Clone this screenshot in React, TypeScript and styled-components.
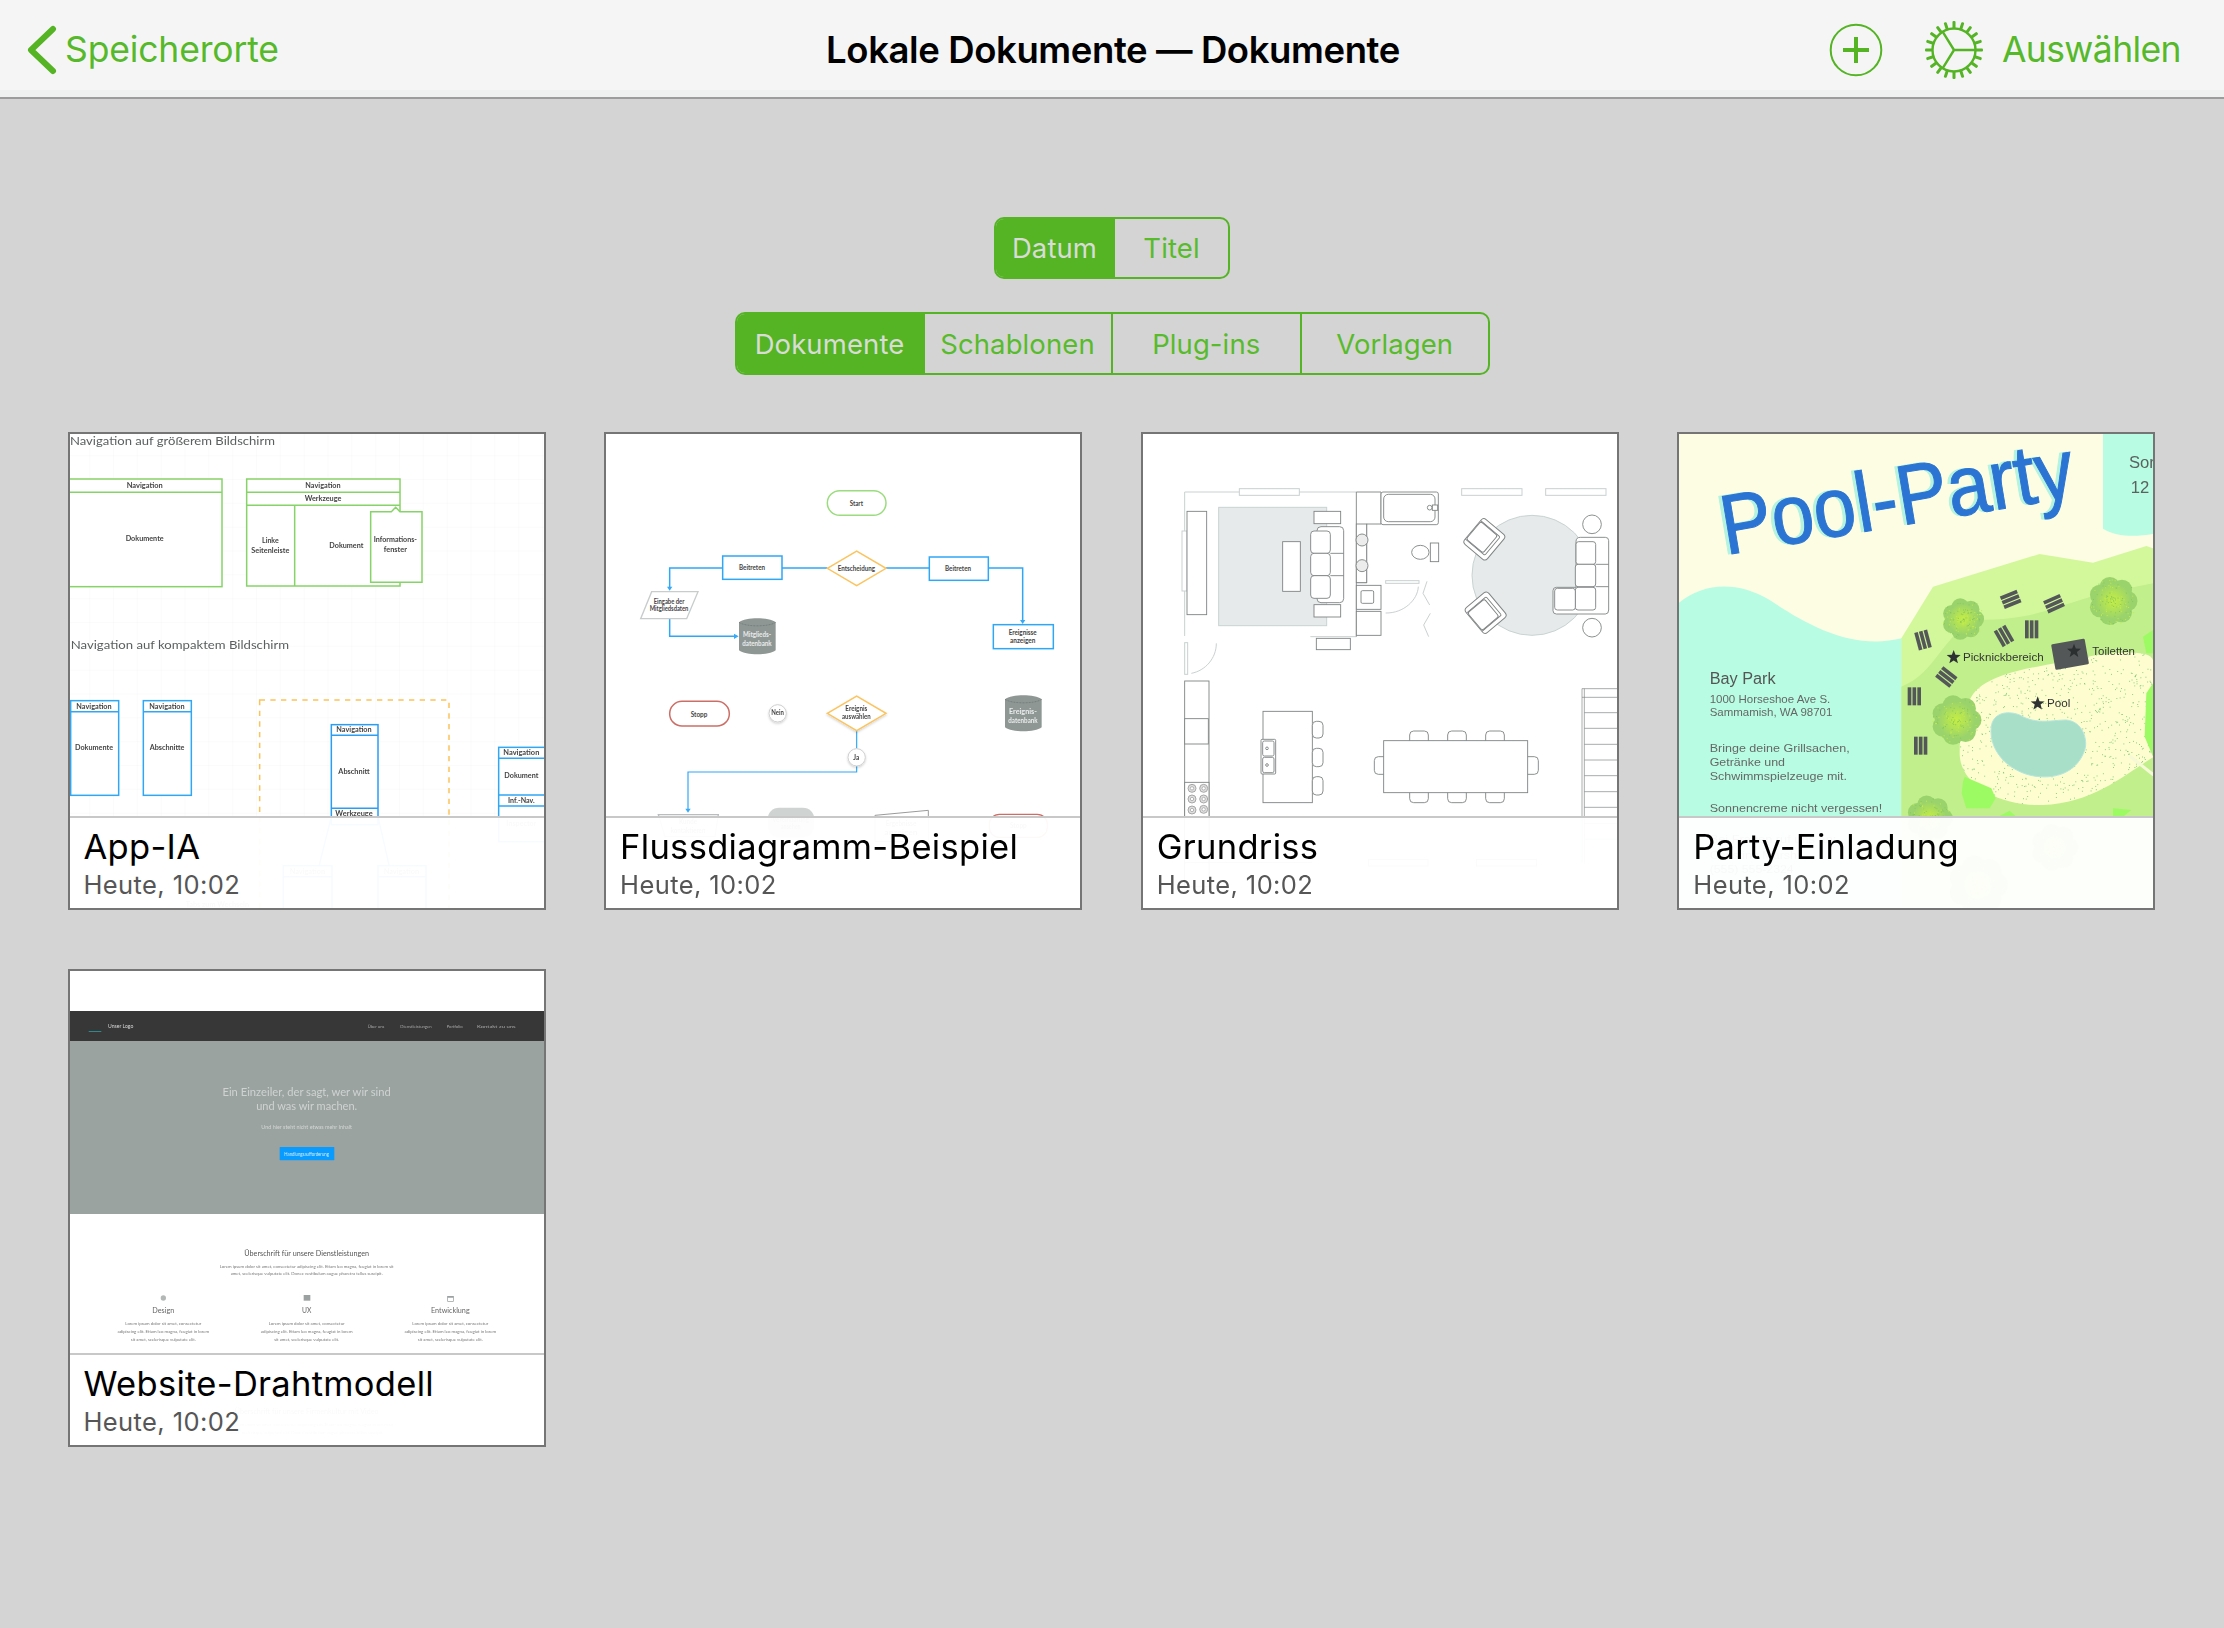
import React from "react";
import styled, { createGlobalStyle } from "styled-components";

const GREEN = "#54b424";
const GlobalStyle = createGlobalStyle`
  html, body { margin: 0; padding: 0; background: #d4d4d4; }
  body { font-family: Inter, "Noto Sans", sans-serif; }
`;

const Page = styled.div`
  width: 2224px;
  height: 1628px;
  overflow: hidden;
  background: #d4d4d4;
  display: flex;
  flex-direction: column;
`;
const NavBar = styled.header`
  box-sizing: border-box;
  height: 99px;
  flex: none;
  background: linear-gradient(#f5f5f5 90px, #eff1f1 90px);
  border-bottom: 2px solid #9c9c9c;
  display: grid;
  grid-template-columns: 1fr auto 1fr;
  align-items: center;
  padding: 2px 43px 0 27px;
`;
const BackLink = styled.div`
  display: flex;
  align-items: center;
  gap: 8px;
  color: ${GREEN};
`;
const NavLabel = styled.span`
  font-size: 35.5px;
  letter-spacing: -0.15px;
  color: #55b92a;
`;
const ActionLabel = styled(NavLabel)`
  letter-spacing: -0.6px;
`;
const NavTitle = styled.h1`
  margin: 0;
  padding-left: 18px;
  font-size: 36.5px;
  font-weight: 600;
  letter-spacing: -0.4px;
  color: #000;
  white-space: nowrap;
`;
const NavActions = styled.div`
  display: flex;
  align-items: center;
  justify-content: flex-end;
`;
const PlusIcon = styled.svg`
  width: 54px;
  height: 54px;
  margin-right: 40px;
`;
const GearIcon = styled.svg`
  width: 62px;
  height: 62px;
  margin-right: 17px;
`;
const Filters = styled.section`
  display: flex;
  flex-direction: column;
  align-items: center;
  gap: 33px;
  margin-top: 118px;
  flex: none;
`;
const Segmented = styled.div`
  display: flex;
  box-sizing: border-box;
  border: 2px solid ${GREEN};
  border-radius: 10px;
  overflow: hidden;
`;
const Segment = styled.div<{ $active?: boolean; $width: number; $height: number }>`
  box-sizing: border-box;
  width: ${(p) => p.$width}px;
  height: ${(p) => p.$height}px;
  display: flex;
  align-items: center;
  justify-content: center;
  font-size: 27.5px;
  letter-spacing: 0.1px;
  background: ${(p) => (p.$active ? GREEN : "transparent")};
  color: ${(p) => (p.$active ? "#d8dcd4" : "#58bb2c")};
  & + & { border-left: 2px solid ${GREEN}; }
`;
const Grid = styled.main`
  display: grid;
  grid-template-columns: repeat(4, 478px);
  column-gap: 58.6px;
  row-gap: 59px;
  margin: 57px 0 0 67.5px;
`;
const Card = styled.article`
  box-sizing: border-box;
  width: 478px;
  height: 478px;
  border: 2px solid #757575;
  background: #fff;
  position: relative;
  overflow: hidden;
`;
const Thumb = styled.svg`
  display: block;
  width: 474px;
  height: 474px;
  filter: blur(0.45px);
`;
const Caption = styled.div`
  position: absolute;
  left: 0;
  right: 0;
  bottom: 0;
  box-sizing: border-box;
  height: 92px;
  border-top: 2px solid #c8c8c8;
  background: rgba(255, 255, 255, 0.955);
  padding: 0 0 0 14px;
  display: flex;
  flex-direction: column;
`;
const CardTitle = styled.div`
  font-size: 34.5px;
  line-height: 40px;
  margin-top: 9px;
  letter-spacing: 0.3px;
  color: #000;
  white-space: nowrap;
`;
const CardDate = styled.div`
  font-size: 25.5px;
  line-height: 30px;
  margin-top: 3px;
  letter-spacing: 0.4px;
  color: #565656;
`;

const Txt = styled.text<{ $serifless?: boolean }>`
  font-family: ${(p) => (p.$serifless ? '"Liberation Sans", Arial, sans-serif' : 'Lato, "Noto Sans", sans-serif')};
`;

type TP = { x: number; y: number; s?: number; c?: string; w?: number; a?: "start" | "middle"; b?: number; h?: boolean; t: string; tr?: string; edge?: string };
const T = ({ x, y, s = 21, c = "#444", w, a = "middle", b = 700, h, t, tr, edge }: TP) => (
  <Txt x={x} y={y} fontSize={s} fill={c} textAnchor={a} fontWeight={b} $serifless={h} textLength={w} lengthAdjust={w ? "spacingAndGlyphs" : undefined} transform={tr} stroke={edge} strokeWidth={edge ? 3 : undefined}>
    {t}
  </Txt>
);

const Chevron = () => (
  <svg width="30" height="50" viewBox="0 0 30 50">
    <path d="M26 4 L4 25 L26 46" fill="none" stroke={GREEN} strokeWidth="6" strokeLinecap="round" strokeLinejoin="round" />
  </svg>
);

const gearTeeth = Array.from({ length: 20 }, (_, i) => (i * 360) / 20);
const Gear = () => (
  <GearIcon viewBox="-31 -31 62 62">
    <circle r="21.5" fill="none" stroke={GREEN} strokeWidth="2.4" />
    <path d="M0 0 L21.5 0 M0 0 L-11.4 -18.3 M0 0 L-11.4 18.3" fill="none" stroke={GREEN} strokeWidth="2.4" />
    {gearTeeth.map((a) => (
      <rect key={a} x="21" y="-1.5" width="8" height="3" rx="1" fill={GREEN} transform={`rotate(${a})`} />
    ))}
  </GearIcon>
);
const Plus = () => (
  <PlusIcon viewBox="-27 -27 54 54">
    <circle r="25.3" fill="none" stroke={GREEN} strokeWidth="2" />
    <path d="M-13 0 H13 M0 -13 V13" stroke={GREEN} strokeWidth="4" />
  </PlusIcon>
);

/* ---------- thumbnails: coordinates are 3× the card's pixels ---------- */
const Pattern = ({ id, size, stroke }: { id: string; size: number; stroke: string }) => (
  <pattern id={id} width={size} height={size} patternUnits="userSpaceOnUse" x="17" y="37">
    <path d={`M${size} 0 V${size} M0 ${size} H${size}`} stroke={stroke} strokeWidth="2" fill="none" />
  </pattern>
);

const WFBox = ({ x, y, w, h, lines = [], col, sw = 4.5, fill = "#fff" }: { x: number; y: number; w: number; h: number; lines?: number[]; col: string; sw?: number; fill?: string }) => (
  <g fill={fill} stroke={col} strokeWidth={sw}>
    <rect x={x} y={y} width={w} height={h} />
    {lines.map((l) => (
      <line key={l} x1={x} x2={x + w} y1={l} y2={l} />
    ))}
  </g>
);

const AppIA = () => {
  const G = "#86d468";
  const B = "#2fa6f6";
  return (
    <Thumb viewBox="28 42 1422 1422">
      <defs>
        <Pattern id="ia-grid" size={71.5} stroke="#f1f4f2" />
      </defs>
      <rect x="28" y="42" width="1422" height="1422" fill="#fff" />
      <rect x="28" y="42" width="1422" height="1422" fill="url(#ia-grid)" />
      <T x={28} y={75} s={36} c="#5a5f5f" a="start" b={400} w={615} t="Navigation auf größerem Bildschirm" />
      <WFBox x={24} y={177} w={460} h={323} lines={[217]} col={G} />
      <T x={252} y={204} t="Navigation" w={108} />
      <T x={252} y={364} t="Dokumente" w={114} />
      <WFBox x={558} y={177} w={460} h={321} lines={[217, 256]} col={G} />
      <line x1="702" x2="702" y1="256" y2="498" stroke={G} strokeWidth="4.5" />
      <T x={787} y={204} t="Navigation" w={106} />
      <T x={787} y={243} t="Werkzeuge" w={110} />
      <T x={629} y={370} t="Linke" w={50} />
      <T x={629} y={400} t="Seitenleiste" w={114} />
      <T x={857} y={383} t="Dokument" w={102} />
      <path d="M930 275 H992 L1005 262 L1018 275 H1084 V487 H930 Z" fill="#fff" stroke={G} strokeWidth="4.5" />
      <T x={1004} y={367} t="Informations-" w={130} />
      <T x={1004} y={397} t="fenster" w={70} />
      <T x={30} y={688} s={37} c="#5a5f5f" a="start" b={400} w={655} t="Navigation auf kompaktem Bildschirm" />
      <WFBox x={30} y={842} w={144} h={284} lines={[875]} col={B} />
      <T x={100} y={866} t="Navigation" w={106} />
      <T x={100} y={990} t="Dokumente" w={114} />
      <WFBox x={248} y={842} w={144} h={284} lines={[875]} col={B} />
      <T x={319} y={866} t="Navigation" w={106} />
      <T x={319} y={990} t="Abschnitte" w={104} />
      <rect x="597" y="840" width="568" height="640" fill="none" stroke="#fbc45a" strokeWidth="4.5" strokeDasharray="16 16" />
      <WFBox x={812} y={914} w={140} h={300} lines={[946, 1165]} col="#2a9df4" />
      <T x={880} y={935} t="Navigation" w={106} />
      <T x={880} y={1061} t="Abschnitt" w={94} />
      <T x={880} y={1188} t="Werkzeuge" w={112} />
      <WFBox x={1314} y={982} w={150} h={283} lines={[1015, 1125, 1158]} col={B} />
      <T x={1382} y={1006} t="Navigation" w={108} />
      <T x={1382} y={1074} t="Dokument" w={102} />
      <T x={1382} y={1149} t="Inf.-Nav." w={80} />
      <T x={1382} y={1218} t="Inspector" c="#888" w={90} />
      <path d="M812 1190 L776 1335 M952 1190 L985 1335" stroke={B} strokeWidth="4" fill="none" />
      <WFBox x={668} y={1337} w={146} h={140} lines={[1370]} col={B} />
      <T x={740} y={1361} t="Navigation" c="#888" w={106} />
      <WFBox x={952} y={1337} w={144} h={140} lines={[1370]} col={B} />
      <T x={1022} y={1361} t="Navigation" c="#888" w={106} />
      <T x={470} y={1462} t="Tabs zum Wechseln" c="#888" w={190} />
    </Thumb>
  );
};

const Cylinder = ({ x, y, t1, t2 }: { x: number; y: number; t1: string; t2: string }) => (
  <g>
    <path d={`M${x} ${y + 12} V${y + 96} C${x + 20} ${y + 112} ${x + 90} ${y + 112} ${x + 110} ${y + 96} V${y + 12} C${x + 90} ${y - 4} ${x + 20} ${y - 4} ${x} ${y + 12} Z`} fill="#8f9795" />
    <path d={`M${x} ${y + 12} C${x + 20} ${y + 26} ${x + 90} ${y + 26} ${x + 110} ${y + 12}`} fill="none" stroke="#6a7272" strokeWidth="2" strokeDasharray="6 3" />
    <T x={x + 54} y={y + 56} c="#e9ecec" t={t1} w={84} />
    <T x={x + 54} y={y + 82} c="#e9ecec" t={t2} w={88} />
  </g>
);
const Arrow = ({ x, y, dir }: { x: number; y: number; dir: "d" | "r" }) => (
  <path d={dir === "d" ? `M${x - 8} ${y - 10} H${x + 8} L${x} ${y + 2} Z` : `M${x - 10} ${y - 8} V${y + 8} L${x + 4} ${y} Z`} fill="#36a9f7" />
);
const Flow = () => {
  const B = "#2fa6f6";
  const O = "#fbc45f";
  return (
    <Thumb viewBox="18 42 1422 1422">
      <defs>
        <filter id="soft" x="-30%" y="-30%" width="160%" height="160%">
          <feDropShadow dx="0" dy="4" stdDeviation="3" floodColor="#000" floodOpacity=".18" />
        </filter>
      </defs>
      <rect x="18" y="42" width="1422" height="1422" fill="#fff" />
      <rect x="682" y="212" width="176" height="74" rx="37" fill="#fff" stroke="#9bdc7f" strokeWidth="4.5" />
      <T x={769} y={258} t="Start" w={40} />
      <g fill="none" stroke={B} strokeWidth="4.5">
        <path d="M546 444 H682 M858 444 H988" />
        <path d="M368 444 H209 V505" />
        <path d="M1165 444 H1268 V605" />
        <path d="M209 596 V649 H410" />
        <path d="M770 1038 V1056 H264 V1170" strokeWidth="3.5" />
        <path d="M770 932 V985" strokeWidth="3.5" />
      </g>
      <Arrow x={209} y={510} dir="d" />
      <Arrow x={1268} y={610} dir="d" />
      <Arrow x={412} y={649} dir="r" />
      <Arrow x={264} y={1176} dir="d" />
      <rect x="368" y="408" width="178" height="70" fill="#fff" stroke={B} strokeWidth="4.5" />
      <T x={456} y={449} t="Beitreten" w={78} />
      <rect x="988" y="411" width="177" height="70" fill="#fff" stroke={B} strokeWidth="4.5" />
      <T x={1074} y={453} t="Beitreten" w={78} />
      <path d="M682 445 L770 393 L858 445 L770 497 Z" fill="#fff" stroke={O} strokeWidth="4.5" />
      <T x={769} y={453} t="Entscheidung" w={112} />
      <path d="M155 515 H294 L260 596 H122 Z" fill="#fff" stroke="#c8cccc" strokeWidth="4" />
      <T x={207} y={551} t="Eingabe der" w={92} />
      <T x={207} y={573} t="Mitgliedsdaten" w={116} />
      <Cylinder x={417} y={595} t1="Mitglieds-" t2="datenbank" />
      <rect x="1180" y="614" width="180" height="72" fill="#fff" stroke={B} strokeWidth="4.5" />
      <T x={1268} y={644} t="Ereignisse" w={84} />
      <T x={1268} y={668} t="anzeigen" w={76} />
      <rect x="209" y="844" width="179" height="74" rx="37" fill="#fff" stroke="#cc6e66" strokeWidth="4.5" />
      <T x={297} y={890} t="Stopp" w={50} />
      <circle cx="533" cy="880" r="26" fill="#fff" stroke="#cfcfcf" strokeWidth="3" filter="url(#soft)" />
      <T x={533} y={886} t="Nein" w={38} />
      <path d="M682 880 L770 828 L858 880 L770 932 Z" fill="#fff" stroke={O} strokeWidth="4.5" filter="url(#soft)" />
      <T x={769} y={873} t="Ereignis" w={66} />
      <T x={769} y={898} t="auswählen" w={86} />
      <Cylinder x={1215} y={826} t1="Ereignis-" t2="datenbank" />
      <circle cx="770" cy="1012" r="26" fill="#fff" stroke="#cfcfcf" strokeWidth="3" filter="url(#soft)" />
      <T x={769} y={1019} t="Ja" w={18} />
      <path d="M175 1184 H355 L345 1250 H195 Z" fill="#fff" stroke="#b9bdbd" strokeWidth="4" />
      <T x={264} y={1212} t="Kunde" c="#777" w={54} />
      <T x={264} y={1238} t="kontaktieren" c="#777" w={104} />
      <rect x="503" y="1163" width="140" height="90" rx="34" fill="#cfd4d2" />
      <T x={572} y={1206} t="Vereinbarung" c="#777" w={110} />
      <T x={572} y={1228} t="ansehen" c="#777" w={60} />
      <path d="M825 1186 L985 1171 V1265 H825 Z" fill="#fff" stroke="#9a9a9a" strokeWidth="3" />
      <T x={903} y={1218} t="Ergebnisse" c="#777" w={92} />
      <T x={903} y={1244} t="anzeigen" c="#777" w={100} />
      <rect x="1168" y="1183" width="174" height="69" rx="30" fill="#fff" stroke="#cc6e66" strokeWidth="4" />
      <T x={1255} y={1224} t="Stopp" c="#777" w={50} />
    </Thumb>
  );
};

const Fp = styled.g`
  fill: #fff;
  stroke: #7f8383;
  stroke-width: 2.7;
`;
const FpLight = styled.g`
  fill: #fff;
  stroke: #c9d1d1;
  stroke-width: 3;
`;
const R = ({ x, y, x2, y2, rx }: { x: number; y: number; x2: number; y2: number; rx?: number }) => <rect x={x} y={y} width={x2 - x} height={y2 - y} rx={rx} />;

const Chair = ({ x, y, r }: { x: number; y: number; r: number }) => (
  <g transform={`translate(${x} ${y}) rotate(${r}) scale(1.06)`}>
    <R x={-46} y={-42} x2={46} y2={42} rx={10} />
    <path d="M-34 42 V-26 Q-34 -30 -30 -30 H30 Q34 -30 34 -26 V42" fill="none" />
    <R x={-32} y={-22} x2={32} y2={40} rx={6} />
  </g>
);
const Floor = () => (
  <Thumb viewBox="38 42 1422 1422">
    <rect x="38" y="42" width="1422" height="1422" fill="#fff" />
    <g fill="#e6eaeb" stroke="#c8d3d2" strokeWidth="3">
      <R x={265} y={262} x2={589} y2={617} />
      <circle cx="1205" cy="466" r="180" />
    </g>
    <FpLight>
      <path d="M163 648 V216 H678" fill="none" />
      <path d="M678 650 H540" fill="none" />
      <R x={327} y={206} x2={507} y2={226} />
      <R x={994} y={206} x2={1175} y2={226} />
      <R x={1246} y={206} x2={1427} y2={226} />
      <R x={155} y={333} x2={170} y2={513} />
      <R x={766} y={482} x2={866} y2={490} />
      <R x={163} y={668} x2={172} y2={763} />
      <path d="M766 579 C820 580 862 540 864 500 M183 760 C225 752 258 715 258 670 M890 484 L878 520 L898 555 M900 580 L880 615 L895 650" fill="none" />
    </FpLight>
    <Fp>
      <R x={170} y={274} x2={229} y2={584} />
      <R x={457} y={365} x2={510} y2={514} />
      <R x={551} y={274} x2={631} y2={311} />
      <R x={551} y={554} x2={631} y2={591} />
      <R x={558} y={655} x2={660} y2={689} />
      {/* sofa */}
      <R x={560} y={320} x2={640} y2={548} rx={12} />
      <R x={541} y={333} x2={600} y2={400} rx={10} />
      <R x={541} y={400} x2={600} y2={467} rx={10} />
      <R x={541} y={467} x2={600} y2={535} rx={10} />
      <path d="M600 400 H640 M600 467 H640" fill="none" />
      {/* bath */}
      <path d="M678 650 V216 H752 V312 H709 V488 H678" fill="none" />
      <R x={752} y={216} x2={924} y2={314} rx={6} />
      <R x={760} y={223} x2={914} y2={305} rx={14} />
      <circle cx="898" cy="263" r="7" />
      <rect x="906" y="255" width="16" height="16" />
      <R x={678} y={312} x2={709} y2={488} />
      <circle cx="695" cy="360" r="18" fill="#ececec" />
      <circle cx="695" cy="437" r="18" fill="#ececec" />
      <ellipse cx="870" cy="397" rx="26" ry="21" />
      <R x={900} y={369} x2={925} y2={425} />
      <R x={678} y={496} x2={752} y2={568} />
      <R x={692} y={512} x2={730} y2={550} rx={4} />
      <R x={678} y={574} x2={752} y2={646} />
      {/* chairs + sectional */}
      <Chair x={1062} y={358} r={130} />
      <Chair x={1066} y={578} r={50} />
      <circle cx="1385" cy="313" r="28" />
      <circle cx="1385" cy="623" r="28" />
      <path d="M1337 365 Q1337 352 1350 352 H1425 Q1435 352 1435 362 V570 Q1435 582 1425 582 H1278 Q1268 582 1268 572 V512 Q1268 502 1278 502 H1337 Z" />
      <R x={1337} y={365} x2={1396} y2={433} rx={8} />
      <R x={1335} y={433} x2={1396} y2={500} rx={8} />
      <R x={1335} y={502} x2={1396} y2={570} rx={8} />
      <R x={1273} y={505} x2={1335} y2={570} rx={8} />
      <path d="M1396 433 H1435 M1396 500 H1435" fill="none" />
      {/* kitchen */}
      <R x={163} y={783} x2={236} y2={1400} />
      <R x={163} y={896} x2={234} y2={972} />
      <R x={163} y={1087} x2={236} y2={1400} />
      <R x={398} y={874} x2={546} y2={1148} />
      <R x={546} y={904} x2={578} y2={954} rx={12} />
      <R x={546} y={985} x2={578} y2={1040} rx={12} />
      <R x={546} y={1070} x2={578} y2={1125} rx={12} />
      <R x={392} y={958} x2={436} y2={1062} rx={3} />
      <R x={397} y={963} x2={431} y2={1008} rx={5} />
      <R x={397} y={1012} x2={431} y2={1058} rx={5} />
      <circle cx="410" cy="985" r="4" />
      <circle cx="410" cy="1035" r="4" />
      {/* dining */}
      {[838, 952, 1066].map((x) => (
        <g key={x}>
          <R x={x} y={933} x2={x + 56} y2={975} rx={12} />
          <R x={x} y={1105} x2={x + 56} y2={1148} rx={12} />
        </g>
      ))}
      <R x={732} y={1010} x2={775} y2={1063} rx={12} />
      <R x={1180} y={1010} x2={1224} y2={1063} rx={12} />
      <R x={760} y={962} x2={1192} y2={1118} />
      {/* stairs */}
      <path d="M1355 1330 V806 H1470 M1362 1330 V806 M1355 832 H1470" fill="none" strokeWidth="2" />
      {[878, 925, 973, 1020, 1067, 1115, 1162, 1210, 1257].map((y) => (
        <line key={y} x1="1362" x2="1470" y1={y} y2={y} strokeWidth="2" />
      ))}
      <path d="M163 1328 H545" fill="none" />
      <R x={715} y={1318} x2={893} y2={1338} />
      <R x={1038} y={1318} x2={1218} y2={1338} />
    </Fp>
    {[[185, 1105], [220, 1105], [185, 1137], [220, 1137], [185, 1170], [220, 1168]].map(([x, y]) => (
      <g key={`${x}-${y}`}>
        <circle cx={x} cy={y} r="12" fill="#dfdfdf" stroke="#9a9a9a" strokeWidth="2.5" />
        <circle cx={x} cy={y} r="5" fill="#fff" stroke="#9a9a9a" strokeWidth="2" />
      </g>
    ))}
  </Thumb>
);

const rand = (seed: number) => {
  let s = seed;
  return () => {
    s = (s * 16807) % 2147483647;
    return s / 2147483647;
  };
};
const r1 = rand(12345);
const sandDots = Array.from({ length: 1000 }, () => ({ x: 860 + r1() * 600, y: 680 + r1() * 490 }));
const Tree = ({ x, y, r, seed }: { x: number; y: number; r: number; seed: number }) => {
  const rn = rand(seed);
  const dots = Array.from({ length: 130 }, () => {
    const a = rn() * Math.PI * 2;
    const d = rn() * r * 0.98;
    return { x: x + Math.cos(a) * d, y: y + Math.sin(a) * d };
  });
  return (
    <g>
      {Array.from({ length: 7 }, (_, i) => (
        <circle key={i} cx={x + Math.cos((i * Math.PI * 2) / 7) * r * 0.6} cy={y + Math.sin((i * Math.PI * 2) / 7) * r * 0.6} r={r * 0.42} fill="#9ad36c" />
      ))}
      <circle cx={x} cy={y} r={r * 0.75} fill="url(#tree)" />
      {dots.map((d, i) => (
        <rect key={i} x={d.x} y={d.y} width="3" height="3" fill={i % 2 ? "#c2ec4e" : "#86c85c"} />
      ))}
    </g>
  );
};
const Bench = ({ x, y, r }: { x: number; y: number; r: number }) => (
  <g transform={`translate(${x} ${y}) rotate(${r})`} fill="#545758">
    <rect x="-27" y="-20" width="54" height="11" />
    <rect x="-27" y="-5.5" width="54" height="11" />
    <rect x="-27" y="9" width="54" height="11" />
  </g>
);
const Star = ({ x, y, r = 22, c = "#2f3232" }: { x: number; y: number; r?: number; c?: string }) => {
  const pts = Array.from({ length: 10 }, (_, i) => {
    const rad = i % 2 ? r * 0.42 : r;
    const a = -Math.PI / 2 + (i * Math.PI) / 5;
    return `${x + Math.cos(a) * rad},${y + Math.sin(a) * rad}`;
  }).join(" ");
  return <polygon points={pts} fill={c} />;
};
const Party = () => (
  <Thumb viewBox="28 42 1422 1422">
    <defs>
      <radialGradient id="tree">
        <stop offset="0" stopColor="#c6ee42" />
        <stop offset="1" stopColor="#9ad36c" />
      </radialGradient>
      <clipPath id="sand">
        <path d="M905 830 C950 760 1080 745 1180 725 C1280 700 1440 680 1450 720 L1470 1000 C1380 1050 1280 1150 1120 1155 C1000 1160 870 1100 870 1000 C870 940 880 870 905 830 Z" />
      </clipPath>
    </defs>
    <rect x="28" y="42" width="1422" height="1422" fill="#fdfde3" />
    <path d="M28 548 C100 490 200 480 300 540 C420 620 550 690 697 655 V1464 H28 Z" fill="#b8fde3" />
    <path d="M1300 42 H1450 V342 C1400 350 1340 352 1300 326 Z" fill="#b8fde3" />
    <path d="M695 655 L790 500 L1110 402 L1270 428 L1430 378 L1450 385 V1464 H695 Z" fill="#d3f89b" />
    <path d="M695 800 C800 760 820 640 920 600 C1100 600 1150 560 1300 520 L1450 490 V1464 H695 Z" fill="#c1ef8c" />
    <path d="M905 830 C950 760 1080 745 1180 725 C1280 700 1440 680 1450 720 L1470 1000 C1380 1050 1280 1150 1120 1155 C1000 1160 870 1100 870 1000 C870 940 880 870 905 830 Z" fill="#fdfdcf" />
    <g clipPath="url(#sand)">
      {sandDots.map((d, i) => (
        <rect key={i} x={d.x} y={d.y} width="2.6" height="2.6" fill="#6cc26c" />
      ))}
    </g>
    <path d="M965 920 C970 880 1010 870 1050 885 C1100 915 1150 900 1190 900 C1240 905 1255 960 1245 990 C1225 1050 1170 1075 1110 1070 C1030 1065 955 1000 965 920 Z" fill="#a8dfc8" stroke="#b6e6e0" strokeWidth="3" />
    <path d="M1380 1008 L1452 1065" stroke="#f6f9d6" strokeWidth="9" />
    <path d="M880 1085 L885 1070 L965 1105 L978 1135 L960 1165 H890 L876 1120 Z" fill="#9cfb62" />
    <path d="M1420 650 L1450 630 V700 H1430 Z M1430 820 L1450 790 V1010 L1425 950 Z M1330 1165 L1385 1170 L1360 1190 H1330 Z M985 1190 L1020 1172 L1040 1190 Z" fill="#9cfb62" />
    <Tree x={880} y={597} r={62} seed={11} />
    <Tree x={1330} y={543} r={72} seed={29} />
    <Tree x={860} y={900} r={74} seed={53} />
    <Tree x={780} y={1195} r={68} seed={71} />
    <Tree x={1155} y={1282} r={70} seed={97} />
    <Tree x={925} y={1395} r={88} seed={113} />
    <Bench x={1023} y={538} r={-22} />
    <Bench x={1153} y={551} r={-24} />
    <Bench x={760} y={660} r={75} />
    <Bench x={1003} y={648} r={60} />
    <Bench x={1086} y={628} r={90} />
    <Bench x={830} y={771} r={38} />
    <Bench x={734} y={829} r={90} />
    <Bench x={753} y={977} r={90} />
    <rect x="1150" y="664" width="102" height="78" fill="#545758" rx="4" transform="rotate(-10 1200 702)" />
    <Star x={1213} y={693} c="#2c2f2f" />
    <Star x={852} y={712} />
    <Star x={1104} y={851} />
    <T h x={880} y={722} s={33} c="#333" a="start" b={400} w={242} t="Picknickbereich" />
    <T h x={1132} y={862} s={32} c="#333" a="start" b={400} w={70} t="Pool" />
    <T h x={1268} y={706} s={31} c="#333" a="start" b={400} w={128} t="Toiletten" />
    <T h x={158} y={405} s={254} c="#b4f3df" a="start" b={400} w={1070} t="Pool-Party" tr="rotate(-9.5 158 405)" edge="#b4f3df" />
    <T h x={168} y={405} s={254} c="#2b74d3" a="start" b={400} w={1070} t="Pool-Party" tr="rotate(-9.5 168 405)" edge="#2b74d3" />
    <T h x={1378} y={145} s={50} c="#5b6260" a="start" b={400} t="Sonntag" />
    <T h x={1383} y={218} s={50} c="#5b6260" a="start" b={400} t="12" />
    <T h x={120} y={792} s={48} c="#555" a="start" b={400} w={198} t="Bay Park" />
    <T h x={120} y={849} s={33} c="#666" a="start" b={400} w={362} t="1000 Horseshoe Ave S." />
    <T h x={120} y={888} s={33} c="#666" a="start" b={400} w={368} t="Sammamish, WA 98701" />
    <T h x={120} y={996} s={33} c="#666" a="start" b={400} w={420} t="Bringe deine Grillsachen," />
    <T h x={120} y={1038} s={33} c="#666" a="start" b={400} w={226} t="Getränke und" />
    <T h x={120} y={1081} s={33} c="#666" a="start" b={400} w={412} t="Schwimmspielzeuge mit." />
    <T h x={120} y={1175} s={33} c="#666" a="start" b={400} w={518} t="Sonnencreme nicht vergessen!" />
    <T h x={120} y={1270} s={33} c="#666" a="start" b={400} w={380} t="Bei Fragen ruf uns an:" />
    <T h x={120} y={1316} s={33} c="#666" a="start" b={400} w={262} t="Christine Marsh" />
    <T h x={120} y={1358} s={33} c="#666" a="start" b={400} w={252} t="(555) 555-2324" />
  </Thumb>
);

const LOREM = ["Lorem ipsum dolor sit amet, consectetur", "adipiscing elit. Etiam leo magna, feugiat in lorem", "sit amet, scelerisque vulputate elit."];
const Wire = () => (
  <Thumb viewBox="28 30 1422 1422">
    <rect x="28" y="30" width="1422" height="1422" fill="#fff" />
    <rect x="28" y="150" width="1422" height="90" fill="#373737" />
    <rect x="28" y="240" width="1422" height="519" fill="#9ba3a1" />
    <rect x="84" y="211" width="38" height="2" fill="#2bb3b8" />
    <T x={142} y={202} s={14} c="#d8d8d8" a="start" b={400} w={76} t="Unser Logo" />
    <T x={946} y={202} s={13} c="#a9a9a9" b={400} w={50} t="Über uns" />
    <T x={1066} y={202} s={13} c="#a9a9a9" b={400} w={94} t="Dienstleistungen" />
    <T x={1182} y={202} s={13} c="#a9a9a9" b={400} w={48} t="Portfolio" />
    <T x={1307} y={202} s={13} c="#a9a9a9" b={400} w={116} t="Kontakt zu uns" />
    <T x={738} y={405} s={34} c="#ced3d2" b={400} w={505} t="Ein Einzeiler, der sagt, wer wir sind" />
    <T x={738} y={447} s={34} c="#ced3d2" b={400} w={303} t="und was wir machen." />
    <T x={738} y={503} s={15} c="#d3d7d6" b={400} w={272} t="Und hier steht nicht etwas mehr Inhalt" />
    <rect x="657" y="558" width="164" height="40" rx="2" fill="#0a9bff" />
    <T x={738} y={584} s={14} c="#d5eeff" b={400} w={134} t="Handlungsaufforderung" />
    <T x={738} y={885} s={21} c="#555" b={400} w={374} t="Überschrift für unsere Dienstleistungen" />
    <T x={738} y={920} s={13} c="#777" b={400} w={522} t="Lorem ipsum dolor sit amet, consectetur adipiscing elit. Etiam leo magna, feugiat in lorem sit" />
    <T x={738} y={943} s={13} c="#777" b={400} w={456} t="amet, scelerisque vulputate elit. Donec vestibulum augue pharetra tellus suscipit." />
    <circle cx="308" cy="1011" r="8" fill="#b3b8b7" />
    <rect x="729" y="1002" width="20" height="17" fill="#9aa1a0" />
    <rect x="1161" y="1006" width="17" height="15" fill="#fff" stroke="#8f9695" strokeWidth="2" />
    <rect x="1161" y="1006" width="17" height="4" fill="#8f9695" />
    {[
      [308, "Design", 66],
      [738, "UX", 28],
      [1169, "Entwicklung", 116],
    ].map(([x, t, w]) => (
      <g key={t as string}>
        <T x={x as number} y={1057} s={21} c="#666" b={400} w={w as number} t={t as string} />
        {LOREM.map((l, i) => (
          <T key={l} x={x as number} y={1093 + i * 23} s={13} c="#777" b={400} w={[228, 275, 195][i]} t={l} />
        ))}
      </g>
    ))}
    <T x={738} y={1358} s={24} c="#777" b={400} w={432} t="Überschrift für unsere Firmenkultur mit Video" />
    <T x={738} y={1396} s={13} c="#888" b={400} w={520} t="Lorem ipsum dolor sit amet, consectetur adipiscing elit. Etiam leo magna, feugiat in lorem sit" />
    <T x={738} y={1420} s={13} c="#888" b={400} w={460} t="amet, scelerisque vulputate elit. Donec vestibulum augue pharetra tellus suscipit." />
  </Thumb>
);

const docs = [
  { title: "App-IA", Art: AppIA },
  { title: "Flussdiagramm-Beispiel", Art: Flow },
  { title: "Grundriss", Art: Floor },
  { title: "Party-Einladung", Art: Party },
  { title: "Website-Drahtmodell", Art: Wire },
];
const sortTabs = [
  { label: "Datum", width: 117 },
  { label: "Titel", width: 115 },
];
const kindTabs = [
  { label: "Dokumente", width: 186 },
  { label: "Schablonen", width: 188 },
  { label: "Plug-ins", width: 189.5 },
  { label: "Vorlagen", width: 187.5 },
];

export default function App() {
  return (
    <Page>
      <GlobalStyle />
      <NavBar>
        <BackLink>
          <Chevron />
          <NavLabel>Speicherorte</NavLabel>
        </BackLink>
        <NavTitle>Lokale Dokumente — Dokumente</NavTitle>
        <NavActions>
          <Plus />
          <Gear />
          <ActionLabel>Auswählen</ActionLabel>
        </NavActions>
      </NavBar>
      <Filters>
        <Segmented>
          {sortTabs.map((s, i) => (
            <Segment key={s.label} $active={i === 0} $width={s.width} $height={58}>{s.label}</Segment>
          ))}
        </Segmented>
        <Segmented>
          {kindTabs.map((s, i) => (
            <Segment key={s.label} $active={i === 0} $width={s.width} $height={59}>{s.label}</Segment>
          ))}
        </Segmented>
      </Filters>
      <Grid>
        {docs.map(({ title, Art }) => (
          <Card key={title}>
            <Art />
            <Caption>
              <CardTitle>{title}</CardTitle>
              <CardDate>Heute, 10:02</CardDate>
            </Caption>
          </Card>
        ))}
      </Grid>
    </Page>
  );
}
